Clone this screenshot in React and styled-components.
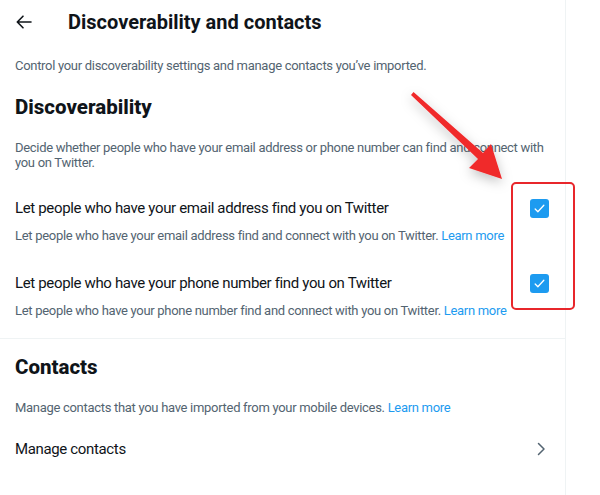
import React from 'react';
import styled, { createGlobalStyle } from 'styled-components';

const GlobalStyle = createGlobalStyle`
  html, body {
    margin: 0;
    padding: 0;
    background: #ffffff;
    font-family: Roboto, "Liberation Sans", Arial, sans-serif;
    color: #0f1419;
  }
`;

const Stage = styled.div`
  position: relative;
  width: 600px;
  height: 495px;
  overflow: hidden;
  background: #fff;
`;

const Column = styled.main`
  width: 566px;
  height: 495px;
  border-right: 1px solid #eff3f4;
  box-sizing: border-box;
`;

const Header = styled.header`
  height: 44px;
  display: flex;
  align-items: center;
  padding: 0 16px;
  gap: 36px;
`;

const BackButton = styled.button`
  width: 16px;
  height: 20px;
  padding: 0;
  border: none;
  background: none;
  display: flex;
  align-items: center;
  color: #0f1419;
`;

const Title = styled.h1`
  margin: 0;
  font-size: 20px;
  font-weight: 700;
  line-height: 24px;
`;

const Note = styled.p`
  margin: ${(p) => p.$margin || '0'};
  padding: 0 15px;
  font-size: 13px;
  letter-spacing: -0.3px;
  line-height: ${(p) => p.$lh || '16px'};
  color: #536471;
`;

const Heading = styled.h2`
  margin: ${(p) => p.$margin || '0'};
  padding: 0 15px;
  font-size: 20.5px;
  font-weight: 800;
  line-height: 24px;
`;

const Setting = styled.div`
  margin-top: ${(p) => p.$top};
  padding: 0 15px;
`;

const SettingRow = styled.label`
  display: flex;
  align-items: center;
  justify-content: space-between;
  height: 20px;
`;

const SettingLabel = styled.span`
  font-size: 15px;
  letter-spacing: -0.35px;
  line-height: 20px;
  color: #0f1419;
`;

const SettingHint = styled.p`
  margin: 10px 0 0;
  font-size: 13px;
  letter-spacing: -0.3px;
  line-height: 16px;
  color: #536471;
`;

const Link = styled.a`
  color: #1d9bf0;
  text-decoration: none;
`;

const Check = styled.span`
  width: 19px;
  height: 19px;
  border-radius: 3px;
  background: #1d9bf0;
  display: flex;
  align-items: center;
  justify-content: center;
  margin-right: 1px;
`;

const Divider = styled.hr`
  margin: 19px 0 0;
  border: none;
  border-top: 1px solid #eff3f4;
`;

const NavRow = styled.div`
  margin-top: 23px;
  padding: 0 19px 0 15px;
  display: flex;
  align-items: center;
  justify-content: space-between;
  height: 20px;
  font-size: 15px;
  letter-spacing: -0.35px;
  color: #0f1419;
`;

const Highlight = styled.div`
  position: absolute;
  left: 511px;
  top: 182px;
  width: 64px;
  height: 128px;
  border: 2px solid #e8262b;
  border-radius: 5px;
  box-sizing: border-box;
`;

const Arrow = styled.svg`
  position: absolute;
  left: 0;
  top: 0;
  pointer-events: none;
`;

const CheckBox = () => (
  <Check>
    <svg width="13" height="13" viewBox="0 0 24 24">
      <path d="M4 13l5 5L20 6" fill="none" stroke="#fff" strokeWidth="2.4" strokeLinecap="round" strokeLinejoin="round" />
    </svg>
  </Check>
);

const App = () => (
  <Stage>
    <GlobalStyle />
    <Column>
      <Header>
        <BackButton aria-label="Back">
          <svg width="16" height="14" viewBox="0 0 16 14">
            <path d="M1.5 7h13.5M7 1.2L1.3 7 7 12.8" fill="none" stroke="#0f1419" strokeWidth="1.6" strokeLinecap="round" strokeLinejoin="round" />
          </svg>
        </BackButton>
        <Title>Discoverability and contacts</Title>
      </Header>
      <Note $margin="14px 0 0">Control your discoverability settings and manage contacts you’ve imported.</Note>

      <Heading $margin="21px 0 0">Discoverability</Heading>
      <Note $margin="21px 0 0" $lh="15px">
        Decide whether people who have your email address or phone number can find and connect with you on Twitter.
      </Note>

      <Setting $top="28px">
        <SettingRow>
          <SettingLabel>Let people who have your email address find you on Twitter</SettingLabel>
          <CheckBox />
        </SettingRow>
        <SettingHint>
          Let people who have your email address find and connect with you on Twitter. <Link>Learn more</Link>
        </SettingHint>
      </Setting>

      <Setting $top="29px">
        <SettingRow>
          <SettingLabel>Let people who have your phone number find you on Twitter</SettingLabel>
          <CheckBox />
        </SettingRow>
        <SettingHint>
          Let people who have your phone number find and connect with you on Twitter. <Link>Learn more</Link>
        </SettingHint>
      </Setting>

      <Divider />

      <Heading $margin="16px 0 0">Contacts</Heading>
      <Note $margin="21px 0 0">
        Manage contacts that you have imported from your mobile devices. <Link>Learn more</Link>
      </Note>

      <NavRow>
        <span>Manage contacts</span>
        <svg width="10" height="14" viewBox="0 0 10 14">
          <path d="M2.5 1.5L8 7l-5.5 5.5" fill="none" stroke="#536471" strokeWidth="1.5" strokeLinecap="round" strokeLinejoin="round" />
        </svg>
      </NavRow>
    </Column>

    <Highlight />
    <Arrow width="600" height="495" viewBox="0 0 600 495">
      <defs>
        <filter id="shade" x="-20%" y="-20%" width="140%" height="140%">
          <feDropShadow dx="0" dy="4" stdDeviation="6" floodColor="#000" floodOpacity="0.25" />
        </filter>
      </defs>
      <polygon
        points="411,95 413.5,92 483,153 491,144 502,179 469,168 478,159"
        fill="#f0292c"
        filter="url(#shade)"
      />
    </Arrow>
  </Stage>
);

export default App;
